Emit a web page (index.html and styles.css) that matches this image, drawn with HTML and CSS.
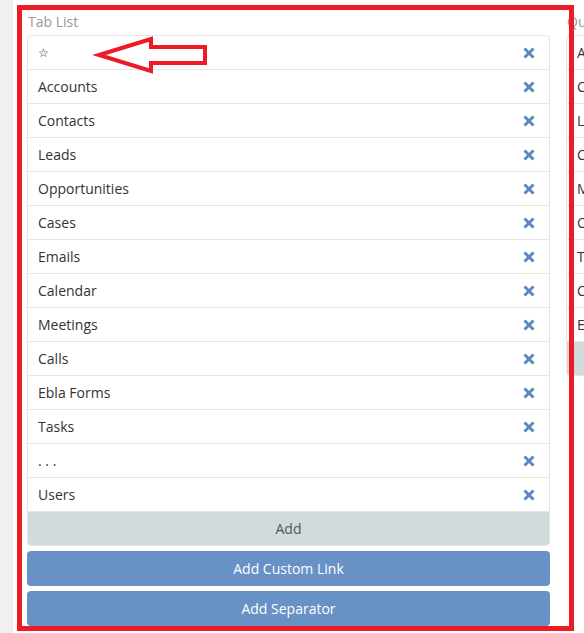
FILE: index.html
```html
<!DOCTYPE html>
<html>
<head>
<meta charset="utf-8">
<link rel="stylesheet" href="styles.css">
</head>
<body>
<div class="page">
  <div class="side"></div>
  <div class="main">
    <div class="column">
      <div class="label">Tab List</div>
      <div class="list">
        <div class="row"><span class="star">☆</span><svg class="x" viewBox="0 0 12 12"><path d="M1.5 1.5 10.5 10.5M10.5 1.5 1.5 10.5"/></svg></div>
        <div class="row"><span>Accounts</span><svg class="x" viewBox="0 0 12 12"><path d="M1.5 1.5 10.5 10.5M10.5 1.5 1.5 10.5"/></svg></div>
        <div class="row"><span>Contacts</span><svg class="x" viewBox="0 0 12 12"><path d="M1.5 1.5 10.5 10.5M10.5 1.5 1.5 10.5"/></svg></div>
        <div class="row"><span>Leads</span><svg class="x" viewBox="0 0 12 12"><path d="M1.5 1.5 10.5 10.5M10.5 1.5 1.5 10.5"/></svg></div>
        <div class="row"><span>Opportunities</span><svg class="x" viewBox="0 0 12 12"><path d="M1.5 1.5 10.5 10.5M10.5 1.5 1.5 10.5"/></svg></div>
        <div class="row"><span>Cases</span><svg class="x" viewBox="0 0 12 12"><path d="M1.5 1.5 10.5 10.5M10.5 1.5 1.5 10.5"/></svg></div>
        <div class="row"><span>Emails</span><svg class="x" viewBox="0 0 12 12"><path d="M1.5 1.5 10.5 10.5M10.5 1.5 1.5 10.5"/></svg></div>
        <div class="row"><span>Calendar</span><svg class="x" viewBox="0 0 12 12"><path d="M1.5 1.5 10.5 10.5M10.5 1.5 1.5 10.5"/></svg></div>
        <div class="row"><span>Meetings</span><svg class="x" viewBox="0 0 12 12"><path d="M1.5 1.5 10.5 10.5M10.5 1.5 1.5 10.5"/></svg></div>
        <div class="row"><span>Calls</span><svg class="x" viewBox="0 0 12 12"><path d="M1.5 1.5 10.5 10.5M10.5 1.5 1.5 10.5"/></svg></div>
        <div class="row"><span>Ebla Forms</span><svg class="x" viewBox="0 0 12 12"><path d="M1.5 1.5 10.5 10.5M10.5 1.5 1.5 10.5"/></svg></div>
        <div class="row"><span>Tasks</span><svg class="x" viewBox="0 0 12 12"><path d="M1.5 1.5 10.5 10.5M10.5 1.5 1.5 10.5"/></svg></div>
        <div class="row"><span>. . .</span><svg class="x" viewBox="0 0 12 12"><path d="M1.5 1.5 10.5 10.5M10.5 1.5 1.5 10.5"/></svg></div>
        <div class="row"><span>Users</span><svg class="x" viewBox="0 0 12 12"><path d="M1.5 1.5 10.5 10.5M10.5 1.5 1.5 10.5"/></svg></div>
        <div class="add">Add</div>
      </div>
      <div class="btn">Add Custom Link</div>
      <div class="btn">Add Separator</div>
    </div>
    <div class="column">
      <div class="label">Quick Create List</div>
      <div class="list">
        <div class="row"><span>Accounts</span></div>
        <div class="row"><span>Contacts</span></div>
        <div class="row"><span>Leads</span></div>
        <div class="row"><span>Cases</span></div>
        <div class="row"><span>Meetings</span></div>
        <div class="row"><span>Opportunities</span></div>
        <div class="row"><span>Tasks</span></div>
        <div class="row"><span>Calls</span></div>
        <div class="row"><span>Emails</span></div>
        <div class="add">Add</div>
      </div>
    </div>
  </div>
  <div class="frame"></div>
  <svg class="arrow" width="584" height="633" viewBox="0 0 584 633"><polygon points="99,55 151,39 151,47 205,47 205,63 151,63 151,71"/></svg>
</div>
</body>
</html>
```
FILE: styles.css
```css
html, body {
  margin: 0;
  padding: 0;
  background: #ffffff;
  overflow: hidden;
}
body {
  font-family: "Open Sans", "Liberation Sans", sans-serif;
  font-size: 14px;
  color: #333333;
}
.page {
  position: relative;
  width: 584px;
  height: 633px;
  display: flex;
  overflow: hidden;
}
.side {
  width: 13px;
  flex: none;
  background: #f0f0f0;
}
.main {
  display: flex;
  gap: 16px;
  padding: 12px 0 0 14px;
}
.column {
  width: 523px;
  flex: none;
  display: flex;
  flex-direction: column;
}
.label {
  color: #999999;
  height: 20px;
  line-height: 20px;
  margin-bottom: 3px;
  padding-left: 1px;
}
.list {
  border: 1px solid #e6e6e6;
  border-radius: 4px;
  overflow: hidden;
}
.row {
  height: 33px;
  border-bottom: 1px solid #e6e6e6;
  display: flex;
  align-items: center;
  justify-content: space-between;
  padding: 0 10px;
}
.star {
  font-family: "DejaVu Sans", sans-serif;
  font-size: 12px;
  color: #222222;
}
.x {
  width: 12px;
  height: 12px;
  margin-right: 4px;
}
.x path {
  stroke: #5b87c5;
  stroke-width: 3;
  fill: none;
}
.add {
  height: 33px;
  line-height: 33px;
  text-align: center;
  background: #d1dadc;
  color: #555555;
}
.btn {
  height: 35px;
  line-height: 35px;
  margin-top: 5px;
  text-align: center;
  background: #6891c5;
  color: #ffffff;
  border-radius: 4px;
}
.frame {
  position: absolute;
  left: 17px;
  top: 5px;
  width: 547px;
  height: 616px;
  border: 5px solid #ed1c24;
}
.arrow {
  position: absolute;
  left: 0;
  top: 0;
}
.arrow polygon {
  fill: none;
  stroke: #ed1c24;
  stroke-width: 4;
  stroke-linejoin: miter;
}
```
